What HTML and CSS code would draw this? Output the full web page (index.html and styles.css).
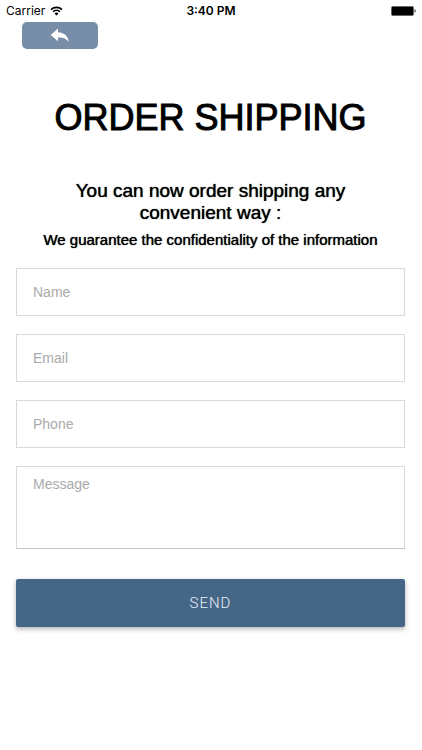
FILE: index.html
```html
<!DOCTYPE html>
<html lang="en">
<head>
  <meta charset="UTF-8">
  <meta name="viewport" content="width=device-width, initial-scale=1.0">
  <title>Order Shipping</title>
  <link rel="stylesheet" href="styles.css">
</head>
<body>
  <!-- Status bar -->
  <div class="status-bar">
    <div class="carrier">
      <span>Carrier</span>
      <svg class="wifi" viewBox="0 0 13 10" width="13" height="10" aria-hidden="true">
        <path d="M1 3.6a8 8 0 0 1 11 0M3 5.8a5 5 0 0 1 7 0" fill="none" stroke="#000" stroke-width="1.6"/>
        <path d="M6.5 9.6 4.5 7.5a2.9 2.9 0 0 1 4 0z"/>
      </svg>
    </div>
    <div class="time">3:40 PM</div>
    <div class="battery">
      <svg viewBox="0 0 26 10" width="26" height="10" aria-hidden="true">
        <rect x="1.5" y="0.5" width="22" height="9" rx="1.2" stroke="#555" stroke-width="0.6"/>
        <path d="M24.600 3.300c1.400.3 1.400 3.100 0 3.400z"/>
      </svg>
    </div>
  </div>

  <!-- Back button -->
  <header>
    <button type="button" class="back-btn" aria-label="Back">
      <svg viewBox="0 0 20 15" width="20" height="15" aria-hidden="true">
        <path d="M8 0.5v3.800c6.500.4 10 4 11 9.700-2.600-3.300-5.500-4.500-11-4.500v3.800L0.700 6.900z" fill="#fff"/>
      </svg>
    </button>
  </header>

  <!-- Main Content -->
  <main>
    <h1>ORDER SHIPPING</h1>
    <h2>You can now order shipping any convenient way :</h2>
    <p class="note">We guarantee the confidentiality of the information</p>

    <form class="order-form">
      <input type="text" id="name" placeholder="Name" aria-label="Name">
      <input type="email" id="email" placeholder="Email" aria-label="Email">
      <input type="tel" id="phone" placeholder="Phone" aria-label="Phone">
      <textarea id="message" placeholder="Message" aria-label="Message"></textarea>
      <button type="submit" class="send-btn">SEND</button>
    </form>
  </main>
</body>
</html>
```

FILE: styles.css
```css
* {
  box-sizing: border-box;
}

body {
  margin: 0;
  background-color: #fff;
  color: #000;
  font-family: "Liberation Sans", Arial, sans-serif;
}

.status-bar {
  display: grid;
  grid-template-columns: 1fr auto 1fr;
  align-items: center;
  height: 22px;
  padding: 0 6px 1px;
  font-family: Inter, sans-serif;
  font-size: 12px;
}

.carrier {
  display: flex;
  align-items: center;
  gap: 5px;
}

.time {
  font-weight: 600;
}

.battery {
  display: flex;
  justify-content: flex-end;
}

header {
  padding: 0 22px;
}

.back-btn {
  display: flex;
  align-items: center;
  justify-content: center;
  width: 76px;
  height: 27px;
  padding: 0;
  border: none;
  border-radius: 5px;
  background-color: #778da8;
  cursor: pointer;
}

main {
  padding: 0 17px 40px 16px;
  text-align: center;
}

/* Medium weight look on a family that only has regular and bold */
h1 {
  margin: 48px 0 41px;
  font-size: 36px;
  line-height: 42px;
  font-weight: normal;
  -webkit-text-stroke: 1px #000;
}

h2 {
  max-width: 300px;
  margin: 0 auto;
  font-size: 19px;
  line-height: 22px;
  font-weight: normal;
  text-shadow: 0 0 1px #000;
}

.note {
  margin: 6px 0 18px;
  font-size: 15px;
  line-height: 20px;
  text-shadow: 0 0 1px #000;
}

.order-form {
  display: flex;
  flex-direction: column;
}

.order-form input,
.order-form textarea {
  width: 100%;
  height: 48px;
  margin: 0 0 18px;
  padding: 0 16px;
  border: 1px solid #d9d9d9;
  border-radius: 0;
  background-color: #fff;
  font-family: inherit;
  font-size: 14px;
  color: #333;
}

.order-form textarea {
  height: 83px;
  margin-bottom: 30px;
  padding-top: 9px;
  border-bottom-color: #c4c4c4;
  resize: none;
}

.order-form ::placeholder {
  color: #aaa;
}

.send-btn {
  height: 48px;
  border: none;
  border-radius: 2px;
  background-color: #456687;
  box-shadow: 0 2px 5px rgba(0, 0, 0, 0.3);
  color: #e9f1fa;
  font-family: Roboto, sans-serif;
  font-size: 15px;
  font-weight: 300;
  letter-spacing: 1px;
  cursor: pointer;
}
```
